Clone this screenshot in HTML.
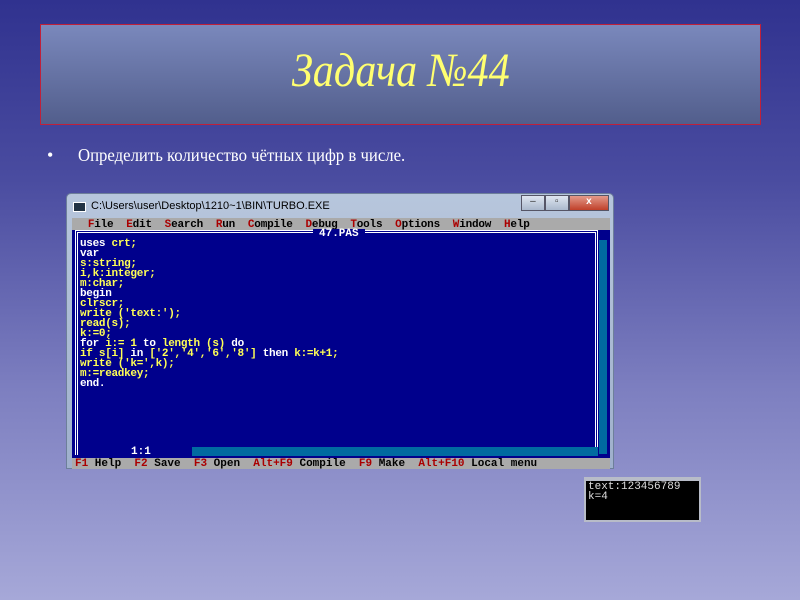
<!DOCTYPE html>
<html><head><meta charset="utf-8"><style>
*{margin:0;padding:0;box-sizing:border-box}
body{width:800px;height:600px;overflow:hidden;position:relative;background:linear-gradient(#30328f 0%,#4a4ca0 30%,#7d7fc0 65%,#a6a8d8 100%);font-family:"Liberation Serif",serif}
.title{position:absolute;left:40px;top:24px;width:721px;height:101px;border:1px solid #c0203a;background:linear-gradient(#7a88bc,#525e8c);text-align:center}
.title span{display:inline-block;margin-top:18px;font-size:48px;font-style:italic;color:#ffff70;transform:scaleX(.88)}
.bul{position:absolute;left:47px;top:145px;color:#fff;font-size:18px}
.bul b{font-weight:normal;position:absolute;left:31px;white-space:nowrap;transform:scaleX(.93);transform-origin:left}
.win{position:absolute;left:66px;top:193px;width:548px;height:276px;background:linear-gradient(#b7c6dc,#9fb0cc);border:1px solid #6d7f9a;border-radius:5px 5px 0 0}
.tt{position:absolute;left:24px;top:6px;font:11px "Liberation Sans",sans-serif;color:#000}
.ico{position:absolute;left:6px;top:8px;width:13px;height:10px;background:#234;border:1px solid #fff}
.btns{position:absolute;left:454px;top:1px;height:17px;width:88px;display:flex}
.btns div{border:1px solid #556;background:linear-gradient(#dfe6f0,#aab8cc);width:26px;height:16px;font:10px sans-serif;text-align:center;color:#333}
.btns div.x{width:44px;background:linear-gradient(#e39a8a,#c0402a);color:#fff;font-weight:bold}
.scr{position:absolute;left:5px;top:24px;width:538px;height:251px;background:#00008c;font:bold 11px/10px "Liberation Mono",monospace;color:#fff}
.menu{position:absolute;left:0;top:0;width:100%;height:12px;padding-top:2px;background:#aaa;color:#000;white-space:pre;padding-left:3px;letter-spacing:-.2px}
.menu i{font-style:normal;color:#a00}
.code{position:absolute;left:8px;top:21px;white-space:pre;letter-spacing:-.3px}
.y{color:#ff5}
.frame{position:absolute;left:3px;top:12px;right:12px;bottom:14px;border:3px double #fff;border-bottom:none}
.hdr{position:absolute;left:241px;top:11px;background:#00008c;padding:0 6px;color:#fff}
.sb{position:absolute;right:3px;top:22px;width:8px;height:214px;background:#006aa0}
.hb{position:absolute;left:120px;bottom:13px;width:406px;height:9px;background:#006aa0}
.pos{position:absolute;left:55px;bottom:12px;background:#00008c;padding:0 4px}
.stat{position:absolute;left:0;bottom:0;width:100%;height:11px;padding-top:1px;background:#aaa;color:#000;white-space:pre;padding-left:3px}
.stat i{font-style:normal;color:#a00}
.con{position:absolute;left:584px;top:477px;width:117px;height:45px;background:#000;border:2px solid #b8bcc8;border-top:4px solid #b8bcc8;color:#ddd;font:11px/10px "Liberation Mono",monospace;padding:1px 2px;white-space:pre}
</style></head><body>
<div class="title"><span>Задача №44</span></div>
<div class="bul">•<b>Определить количество чётных цифр в числе.</b></div>
<div class="win">
<div class="ico"></div><div class="tt">C:\Users\user\Desktop\1210~1\BIN\TURBO.EXE</div>
<div class="btns"><div>–</div><div>▫</div><div class="x">x</div></div>
<div class="scr">
<div class="menu">  <i>F</i>ile  <i>E</i>dit  <i>S</i>earch  <i>R</i>un  <i>C</i>ompile  <i>D</i>ebug  <i>T</i>ools  <i>O</i>ptions  <i>W</i>indow  <i>H</i>elp</div>
<div class="frame"></div>
<div class="hdr">47.PAS</div>
<div class="sb"></div>
<div class="code">uses <span class="y">crt;</span>
var
<span class="y">s:string;
i,k:integer;
m:char;</span>
begin
<span class="y">clrscr;
write ('text:');
read(s);
k:=0;</span>
for <span class="y">i:= 1</span> to <span class="y">length (s)</span> do
<span class="y">if s[i]</span> in <span class="y">['2','4','6','8']</span> then <span class="y">k:=k+1;
write ('k=',k);
m:=readkey;</span>
end.</div>
<div class="hb"></div>
<div class="pos">1:1</div>
<div class="stat"><i>F1</i> Help  <i>F2</i> Save  <i>F3</i> Open  <i>Alt+F9</i> Compile  <i>F9</i> Make  <i>Alt+F10</i> Local menu</div>
</div>
</div>
<div class="con">text:123456789
k=4</div>
</body></html>
